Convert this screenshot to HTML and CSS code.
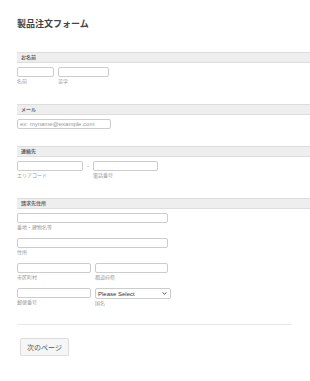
FILE: index.html
```html
<!DOCTYPE html>
<html lang="ja">
<head>
  <meta charset="UTF-8" />
  <meta name="viewport" content="width=device-width, initial-scale=1.0"/>
  <title>製品注文フォーム</title>
  <link rel="stylesheet" href="styles.css">
</head>
<body>
  <div class="formulario">
    <h1 class="titulo">製品注文フォーム</h1>

    <!-- お名前 -->
    <div class="secao">
      <div class="cabecalho">お名前</div>
      <div class="linha">
        <div class="campo"><input type="text" class="w-nome"><span class="rotulo">名前</span></div>
        <div class="campo"><input type="text" class="w-sobrenome"><span class="rotulo">苗字</span></div>
      </div>
    </div>

    <!-- メール -->
    <div class="secao">
      <div class="cabecalho">メール</div>
      <div class="linha sem-rotulo">
        <input type="email" class="w-email" placeholder="ex: myname@example.com">
      </div>
    </div>

    <!-- 連絡先 -->
    <div class="secao">
      <div class="cabecalho">連絡先</div>
      <div class="linha">
        <div class="campo"><input type="text" class="w-area"><span class="rotulo">エリアコード</span></div>
        <span class="traco">-</span>
        <div class="campo"><input type="text" class="w-fone"><span class="rotulo">電話番号</span></div>
      </div>
    </div>

    <!-- 請求先住所 -->
    <div class="secao ultima">
      <div class="cabecalho">請求先住所</div>
      <div class="linha">
        <div class="campo"><input type="text" class="w-longo"><span class="rotulo">番地・建物名等</span></div>
      </div>
      <div class="linha">
        <div class="campo"><input type="text" class="w-longo"><span class="rotulo">住所</span></div>
      </div>
      <div class="linha">
        <div class="campo"><input type="text" class="w-meio"><span class="rotulo">市区町村</span></div>
        <div class="campo"><input type="text" class="w-meio2"><span class="rotulo">都道府県</span></div>
      </div>
      <div class="linha">
        <div class="campo"><input type="text" class="w-meio"><span class="rotulo">郵便番号</span></div>
        <div class="campo">
          <select class="w-pais">
            <option>Please Select</option>
          </select>
          <span class="rotulo">国名</span>
        </div>
      </div>
    </div>

    <div class="divisor"></div>

    <button class="botao">次のページ</button>
  </div>
</body>
</html>
```

FILE: styles.css
```css
body {
  margin: 0;
  font-family: 'Liberation Sans', 'Noto Sans CJK JP', sans-serif;
  background: #fff;
  color: #333;
}

.formulario {
  padding: 18px 0 0 17px;
}

.titulo {
  font-size: 9px;
  line-height: 12px;
  font-weight: bold;
  color: #444;
  margin: 0 0 22px 0;
}

.secao {
  display: flow-root;
  margin-bottom: 12px;
}

.secao.ultima {
  margin-bottom: 10px;
}

.cabecalho {
  box-sizing: border-box;
  height: 11px;
  line-height: 9px;
  background: #eee;
  border-top: 1px solid #ddd;
  border-bottom: 1px solid #ddd;
  padding-left: 4px;
  font-size: 5px;
  font-weight: bold;
  color: #666;
  margin-bottom: 4px;
}

.linha {
  display: flex;
  gap: 3px;
  margin-bottom: 7px;
}

.linha.sem-rotulo {
  margin-bottom: 5px;
}

.campo {
  display: flex;
  flex-direction: column;
}

input,
select {
  box-sizing: border-box;
  height: 10px;
  margin: 0;
  padding: 0 2px;
  border: 1px solid #ccc;
  border-radius: 2px;
  background: #fff;
  font-family: inherit;
  font-size: 6px;
  outline: none;
}

input::placeholder {
  color: #999;
}

select {
  -webkit-appearance: none;
  appearance: none;
  height: 11px;
  color: #333;
  padding-left: 2px;
  background-image: url("data:image/svg+xml;utf8,<svg xmlns='http://www.w3.org/2000/svg' width='6' height='4' viewBox='0 0 6 4'><path d='M0.5 0.5 L3 3.2 L5.5 0.5' fill='none' stroke='%23333' stroke-width='1.1'/></svg>");
  background-repeat: no-repeat;
  background-position: right 3px center;
  background-size: 5px 3px;
}

.rotulo {
  font-size: 5px;
  line-height: 8px;
  color: #999;
}

.traco {
  font-size: 6px;
  line-height: 10px;
  color: #777;
  width: 4px;
  text-align: center;
}

.w-nome { width: 37px; }
.w-sobrenome { width: 51px; }
.w-email { width: 94px; }
.w-area { width: 66px; }
.w-fone { width: 65px; }
.w-longo { width: 151px; }
.w-meio { width: 74px; }
.w-meio2 { width: 73px; }
.w-pais { width: 76px; }

.linha .campo + .campo { margin-left: 1px; }

.divisor {
  width: 275px;
  height: 1px;
  background: #e8e8e8;
  margin-bottom: 11px;
}

.botao {
  margin-left: 3px;
  width: 49px;
  height: 18px;
  padding: 0;
  border: 1px solid #ddd;
  border-radius: 2px;
  background: #f6f6f6;
  box-shadow: 0 1px 1px rgba(0,0,0,0.08);
  font-family: inherit;
  font-size: 7px;
  color: #555;
  cursor: pointer;
}
```
